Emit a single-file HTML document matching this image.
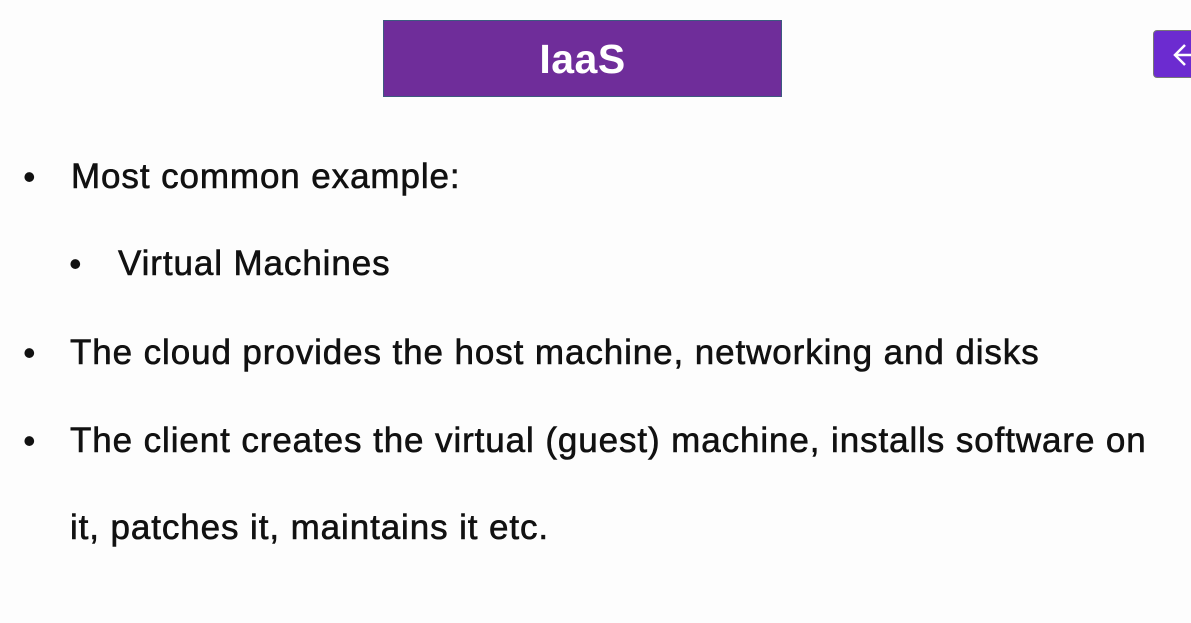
<!DOCTYPE html>
<html><head><meta charset="utf-8"><style>
html,body{margin:0;padding:0;background:#fdfdfd;width:1191px;height:623px;overflow:hidden;position:relative;font-family:"Liberation Sans",sans-serif;}
.title{position:absolute;left:383px;top:20px;width:399px;height:77px;background:#6f2d9a;border:1px solid #3d5a80;box-sizing:border-box;color:#fff;font-weight:bold;font-size:41px;text-align:center;line-height:77px;letter-spacing:0.5px;}
.btn{position:absolute;left:1153px;top:30px;width:50px;height:48px;background:#6c2bd0;border-radius:4px;border:1px solid #777;box-sizing:border-box;}
.t{position:absolute;white-space:nowrap;font-size:35px;color:#111;letter-spacing:0.9px;line-height:40px;-webkit-text-stroke:0.6px #111;}
.b{position:absolute;font-size:36px;color:#111;line-height:40px;}
</style></head><body>
<div class="title">IaaS</div>
<div class="btn"><svg width="50" height="48" style="position:absolute;left:0;top:0"><path d="M40 24H22M31 14l-10 10 10 10" stroke="#fff" stroke-width="2.5" fill="none"/></svg></div>
<div class="b" style="left:23px;top:157px">•</div>
<div class="t" style="left:71px;top:157px">Most common example:</div>
<div class="b" style="left:69px;top:244px">•</div>
<div class="t" style="left:118px;top:244px">Virtual Machines</div>
<div class="b" style="left:23px;top:333px">•</div>
<div class="t" style="left:70px;top:333px">The cloud provides the host machine, networking and disks</div>
<div class="b" style="left:23px;top:421px">•</div>
<div class="t" style="left:70px;top:421px">The client creates the virtual (guest) machine, installs software on</div>
<div class="t" style="left:70px;top:508px">it, patches it, maintains it etc.</div>
</body></html>
